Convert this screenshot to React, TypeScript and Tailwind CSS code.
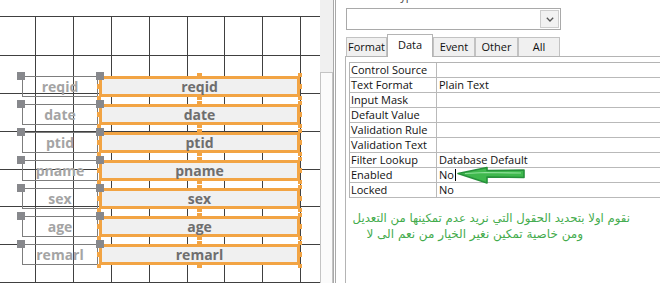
import React from "react";

const FIELDS = ["reqid", "date", "ptid", "pname", "sex", "age", "remarl"];
const VX = [35, 73, 111, 149, 187, 224, 262, 300];
const HY = [16, 55, 93, 131, 169, 206, 244, 282];

function GridLines() {
  return (
    <svg className="absolute inset-0" width="320" height="283" shapeRendering="crispEdges">
      {VX.map((x) => (
        <line key={"v" + x} x1={x + 0.5} y1={16} x2={x + 0.5} y2={283} stroke="#404040" strokeWidth="1" />
      ))}
      {HY.map((y) => (
        <line key={"h" + y} x1={0} y1={y + 0.5} x2={320} y2={y + 0.5} stroke="#404040" strokeWidth="1" />
      ))}
    </svg>
  );
}

function FieldRow({ name }: { name: string }) {
  return (
    <div className="flex h-[21px]">
      <div className="relative ml-[22px] w-[76px] h-full border border-[#7d7d7d] flex items-center justify-center">
        <span className="text-[14px] font-bold text-[#a4a4a4] leading-none">{name}</span>
        <div className="absolute left-[-6px] top-[-5px] w-[8px] h-[8px] bg-[#87888c]" />
      </div>
      <div className="relative ml-[1px] w-[201px] h-full border-[3px] border-[#f2a444] bg-[#f0f0f0] flex items-center justify-center">
        <span className="text-[14px] font-bold text-[#6e6e6e] leading-none">{name}</span>
        <div className="absolute left-[-6px] top-[-7px] w-[8px] h-[8px] bg-[#87888c]" />
        <div className="absolute left-[95px] top-[-6px] w-[5px] h-[3px] bg-[#f2a444]" />
        <div className="absolute left-[95px] bottom-[-6px] w-[5px] h-[3px] bg-[#f2a444]" />
        <div className="absolute left-[-5px] top-[5px] w-[2px] h-[5px] bg-[#f2a444]" />
        <div className="absolute right-[-5px] top-[5px] w-[2px] h-[5px] bg-[#f2a444]" />
        <div className="absolute right-[-5px] top-[-6px] w-[4px] h-[4px] bg-[#f2a444]" />
        <div className="absolute right-[-5px] bottom-[-6px] w-[4px] h-[4px] bg-[#f2a444]" />
        <div className="absolute left-[-5px] bottom-[-6px] w-[4px] h-[4px] bg-[#f2a444]" />
      </div>
    </div>
  );
}

const PROPS: [string, string][] = [
  ["Control Source", ""],
  ["Text Format", "Plain Text"],
  ["Input Mask", ""],
  ["Default Value", ""],
  ["Validation Rule", ""],
  ["Validation Text", ""],
  ["Filter Lookup", "Database Default"],
  ["Enabled", "No"],
  ["Locked", "No"],
];

function Arrow() {
  return (
    <svg className="absolute left-[20px] top-[-2px]" width="70" height="19" viewBox="0 0 70 19">
      <path
        d="M1 7.5 L30 1.5 L30 4.5 L67 4 L67 11.5 L30 11 L30 17 Z"
        fill="#3fb84d"
        stroke="#26913a"
        strokeWidth="1.6"
        strokeLinejoin="round"
      />
      <path d="M8 7.5 L28 6.5 L64 7" fill="none" stroke="#8fe09a" strokeWidth="1.2" />
    </svg>
  );
}

function PropGrid() {
  return (
    <div className="border-l border-t border-[#b4b4b4]">
      {PROPS.map(([k, v]) => (
        <div key={k} className="flex h-[15px] border-b border-[#b9b9b9] text-[11px] leading-[14px] text-[#111]">
          <div className="w-[87px] shrink-0 border-r border-[#b9b9b9] pl-[1px] whitespace-nowrap">{k}</div>
          <div className="relative flex-1 pl-[2px] whitespace-nowrap flex items-start">
            <span>{v}</span>
            {k === "Enabled" && (
              <>
                <span className="inline-block w-px h-[12px] bg-black ml-[1px] mt-[1px]" />
                <Arrow />
              </>
            )}
          </div>
        </div>
      ))}
    </div>
  );
}

function Tab({ label, w, active }: { label: string; w: string; active?: boolean }) {
  if (active) {
    return (
      <div className={`${w} h-[23px] -mb-px bg-white border border-b-0 border-[#b4b4b4] text-center leading-[18px] pt-[1px] shrink-0`}>
        {label}
      </div>
    );
  }
  return (
    <div className={`${w} h-[19px] bg-[#f0f0f0] border border-b-0 border-[#c2c2c2] text-center leading-[18px] shrink-0`}>
      {label}
    </div>
  );
}

export default function App() {
  return (
    <div className="w-[660px] h-[283px] flex overflow-hidden bg-white font-['Open_Sans',sans-serif] text-[#111]">
      <div className="relative w-[320px] h-full shrink-0 bg-white">
        <GridLines />
        <div className="relative flex flex-col gap-[7px] pt-[76px]">
          {FIELDS.map((f) => (
            <FieldRow key={f} name={f} />
          ))}
        </div>
      </div>

      <div className="w-[13px] h-full shrink-0 bg-[#f0f0f0] flex flex-col">
        <div className="h-[72px] shrink-0" />
        <div className="flex-1 bg-[#fbfbfb] border border-b-0 border-[#c4c4c4]" />
      </div>
      <div className="w-[3px] h-full shrink-0 border-l border-r border-[#a9a9a9] bg-white" />

      <div className="flex-1 h-full flex flex-col pl-[9px] text-[11px]">
        <div className="h-[8px] overflow-hidden shrink-0">
          <div className="-mt-[12px] ml-[2px] leading-[15px] text-[#444] whitespace-nowrap">Selection type:&nbsp; Text Box</div>
        </div>
        <div className="ml-[1px] w-[215px] h-[22px] shrink-0 border border-[#a9a9a9] bg-white flex justify-end p-px">
          <div className="w-[19px] border border-[#cdcdcd] bg-[#f2f2f2] flex items-center justify-center">
            <svg width="8" height="5" viewBox="0 0 8 5">
              <path d="M0.8 0.8 L4 4 L7.2 0.8" fill="none" stroke="#555" strokeWidth="1.3" />
            </svg>
          </div>
        </div>
        <div className="mt-[4px] ml-[1px] h-[22px] flex items-end relative z-10 shrink-0">
          <Tab label="Format" w="w-[41px]" />
          <Tab label="Data" w="w-[46px]" active />
          <Tab label="Event" w="w-[42px]" />
          <Tab label="Other" w="w-[43px]" />
          <Tab label="All" w="w-[42px]" />
        </div>
        <div className="flex-1 border-l border-t border-[#b4b4b4] pl-[3px] pt-[5px]">
          <PropGrid />
          <div dir="rtl" className="mt-[12px] font-['DejaVu_Sans',sans-serif] leading-[16px] text-[#43ab4c] whitespace-nowrap">
            <div className="mr-[30px] text-[11.7px]">نقوم اولا بتحديد الحقول التي نريد عدم تمكينها من التعديل</div>
            <div className="mr-[77px] text-[12px]">ومن خاصية تمكين نغير الخيار من نعم الى لا</div>
          </div>
        </div>
      </div>
    </div>
  );
}
